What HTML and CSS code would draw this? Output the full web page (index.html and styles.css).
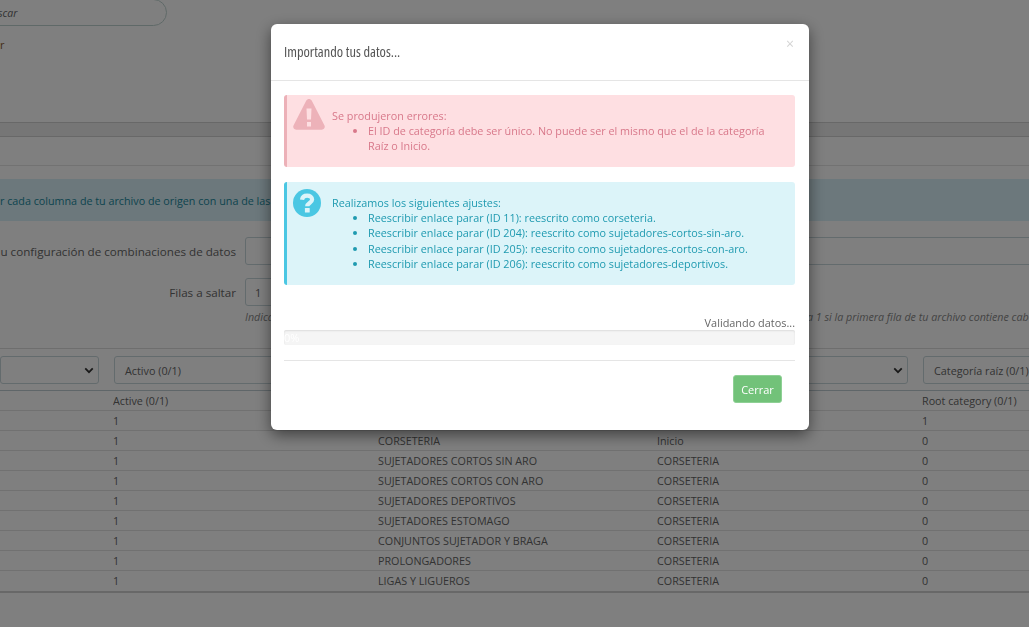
FILE: index.html
```html
<!DOCTYPE html>
<html lang="es">
<head>
<meta charset="utf-8">
<title>Importando tus datos</title>
<link rel="stylesheet" href="styles.css">
</head>
<body>
<div class="page">
  <div class="search"><span class="search-text">scar</span></div>
  <div class="crumb">r</div>
  <div class="band"></div>
  <div class="band-row"></div>
  <div class="page-alert"><span>r cada columna de tu archivo de origen con una de las</span></div>
  <div class="form-row">
    <label class="form-label">u configuración de combinaciones de datos</label>
    <div class="field field-wide"></div>
  </div>
  <div class="form-row form-row-second">
    <label class="form-label">Filas a saltar</label>
    <div class="field field-short">1</div>
  </div>
  <div class="help-row">
    <em class="help-start">Indica</em>
    <em class="help-end">a 1 si la primera fila de tu archivo contiene cabeceras</em>
  </div>
  <div class="selects">
    <div class="select select-end"><svg class="chev" viewBox="0 0 12 8"><path d="M1.5 1.5 6 6l4.5-4.5" /></svg></div>
    <div class="select">Activo (0/1)</div>
    <div class="select"></div>
    <div class="select select-end"><svg class="chev" viewBox="0 0 12 8"><path d="M1.5 1.5 6 6l4.5-4.5" /></svg></div>
    <div class="select">Categoría raíz (0/1)</div>
  </div>
  <table class="data">
    <colgroup><col class="c1"><col class="c2"><col class="c3"><col class="c4"><col class="c5"></colgroup>
    <thead><tr><th></th><th>Active (0/1)</th><th></th><th></th><th>Root category (0/1)</th></tr></thead>
    <tbody>
      <tr><td></td><td>1</td><td></td><td></td><td>1</td></tr>
      <tr><td></td><td>1</td><td>CORSETERIA</td><td>Inicio</td><td>0</td></tr>
      <tr><td></td><td>1</td><td>SUJETADORES CORTOS SIN ARO</td><td>CORSETERIA</td><td>0</td></tr>
      <tr><td></td><td>1</td><td>SUJETADORES CORTOS CON ARO</td><td>CORSETERIA</td><td>0</td></tr>
      <tr><td></td><td>1</td><td>SUJETADORES DEPORTIVOS</td><td>CORSETERIA</td><td>0</td></tr>
      <tr><td></td><td>1</td><td>SUJETADORES ESTOMAGO</td><td>CORSETERIA</td><td>0</td></tr>
      <tr><td></td><td>1</td><td>CONJUNTOS SUJETADOR Y BRAGA</td><td>CORSETERIA</td><td>0</td></tr>
      <tr><td></td><td>1</td><td>PROLONGADORES</td><td>CORSETERIA</td><td>0</td></tr>
      <tr><td></td><td>1</td><td>LIGAS Y LIGUEROS</td><td>CORSETERIA</td><td>0</td></tr>
    </tbody>
  </table>
</div>

<div class="overlay">
  <div class="modal">
    <div class="modal-header">
      <h4 class="modal-title">Importando tus datos...</h4>
      <span class="close">×</span>
    </div>
    <div class="modal-body">
      <div class="alert alert-danger">
        <svg class="alert-icon icon-warn" viewBox="0 0 32 31">
          <path fill-rule="evenodd" d="M16 0c1.200 0 2.100.6 2.700 1.600l12.800 25c.9 1.900-.4 4.100-2.600 4.100H3.100C.9 30.700-.4 28.500.5 26.600l12.800-25C13.900.6 14.800 0 16 0ZM13.500 9.500l.5 11h4l.5-11h-5ZM14 23v4.500h4V23h-4Z"/>
        </svg>
        <div class="alert-text">
          <p>Se produjeron errores:</p>
          <ul><li>El ID de categoría debe ser único. No puede ser el mismo que el de la categoría Raíz o Inicio.</li></ul>
        </div>
      </div>
      <div class="alert alert-info">
        <svg class="alert-icon icon-help" viewBox="0 0 28 28">
          <circle class="help-disc" cx="14" cy="14" r="14"/>
          <path class="help-mark" d="M9 10.800c.4-2.700 2.400-4.200 5.100-4.200 2.800 0 5 1.500 5 3.900 0 3.500-4.900 3.500-4.900 6.800"/>
          <rect class="help-dot" x="11.900" y="19.100" width="4.800" height="4.300" rx=".5"/>
        </svg>
        <div class="alert-text">
          <p>Realizamos los siguientes ajustes:</p>
          <ul>
            <li>Reescribir enlace parar (ID 11): reescrito como corseteria.</li>
            <li>Reescribir enlace parar (ID 204): reescrito como sujetadores-cortos-sin-aro.</li>
            <li>Reescribir enlace parar (ID 205): reescrito como sujetadores-cortos-con-aro.</li>
            <li>Reescribir enlace parar (ID 206): reescrito como sujetadores-deportivos.</li>
          </ul>
        </div>
      </div>
      <div class="progress-label">Validando datos...</div>
      <div class="progress"><span class="progress-value">0%</span></div>
      <div class="modal-actions">
        <button class="btn-close" type="button">Cerrar</button>
      </div>
    </div>
  </div>
</div>
</body>
</html>
```

FILE: styles.css
```css
* { box-sizing: border-box; }
html, body { margin: 0; padding: 0; height: 100%; overflow: hidden; }
body {
  background: #fff;
  font-family: "Open Sans", "Liberation Sans", sans-serif;
  font-size: 11px;
  color: #666;
}

.page {
  width: 1029px;
  height: 627px;
  overflow: hidden;
  display: flex;
  flex-direction: column;
}
.search {
  flex: none;
  width: 187px;
  height: 27px;
  margin: -1px 0 0 -20px;
  padding: 1px 0 0 17px;
  border: 1px solid #bfd3d0;
  border-radius: 14px;
  display: flex;
  align-items: center;
  font-style: italic;
  font-size: 10.500px;
  color: #666;
}
.crumb { flex: none; height: 16px; margin-top: 11px; line-height: 16px; color: #8a5a2a; font-size: 11px; }
.band {
  flex: none;
  height: 15px;
  margin-top: 69px;
  background: #ececec;
  border-top: 1px solid #d0d0d0;
  border-bottom: 1px solid #d0d0d0;
}
.band-row { flex: none; height: 29px; border-bottom: 1px solid #e4e4e4; }
.page-alert {
  flex: none;
  height: 42px;
  margin-top: 13px;
  background: #d8f0f8;
  color: #1a8a9e;
  display: flex;
  align-items: center;
  white-space: nowrap;
  font-size: 10.760px;
}
.form-row { flex: none; display: flex; height: 28px; margin-top: 16px; gap: 9px; }
.form-row-second { margin-top: 13px; }
.form-label {
  flex: none;
  width: 236px;
  display: flex;
  justify-content: flex-end;
  align-items: center;
  white-space: nowrap;
  font-size: 11.650px;
  color: #666;
}
.field {
  height: 28px;
  border: 1px solid #c7d6db;
  border-radius: 3px;
  padding-left: 9px;
  display: flex;
  align-items: center;
}
.field-wide { flex: none; width: 900px; }
.field-short { flex: none; width: 100px; }
.help-row {
  flex: none;
  height: 43px;
  padding-left: 245px;
  padding-top: 3px;
  line-height: 16px;
  display: flex;
  border-bottom: 1px solid #dcdcdc;
  color: #888;
  white-space: nowrap;
  font-size: 10.700px;
}
.help-start { flex: none; width: 562px; }
.selects {
  flex: none;
  display: grid;
  grid-template-columns: 99px repeat(3, 1fr) 130px;
  column-gap: 15px;
  width: 1053px;
  padding-top: 7px;
  padding-bottom: 6px;
}
.select {
  height: 28px;
  border: 1px solid #c7d6db;
  border-radius: 3px;
  padding: 0 10px;
  display: flex;
  align-items: center;
  justify-content: space-between;
  white-space: nowrap;
  overflow: hidden;
  font-size: 10.800px;
}
.select-end { justify-content: flex-end; padding-right: 4px; }
.chev { width: 10px; height: 7px; fill: none; stroke: #333; stroke-width: 2.200; }

.data {
  flex: none;
  width: 1029px;
  table-layout: fixed;
  border-collapse: collapse;
  border-top: 1px solid #bfcdd3;
  border-bottom: 2px solid #d0d0d0;
  font-size: 10.750px;
}
.c1 { width: 113px; }
.c2 { width: 265px; }
.c3 { width: 279px; }
.c4 { width: 265px; }
.c5 { width: 107px; }
.data th, .data td {
  height: 20px;
  padding: 0;
  text-align: left;
  font-weight: 400;
  white-space: nowrap;
  overflow: hidden;
  border-bottom: 1px solid #e2e2e2;
}
.data tbody tr:last-child td { height: 21px; border-bottom: 0; }

.overlay {
  position: fixed;
  inset: 0;
  padding-left: 51px;
  background: rgba(0, 0, 0, .5);
  display: flex;
  justify-content: center;
  align-items: flex-start;
}
.modal {
  width: 538px;
  height: 406px;
  margin-top: 24px;
  background: #fff;
  border-radius: 6px;
  box-shadow: 0 5px 15px rgba(0, 0, 0, .5);
  display: flex;
  flex-direction: column;
}
.modal-header {
  flex: none;
  height: 57px;
  padding: 0 13px;
  border-bottom: 1px solid #e5e5e5;
  display: flex;
  justify-content: space-between;
  align-items: flex-start;
}
.modal-title {
  margin: 19px 0 0;
  font-size: 14.400px;
  line-height: 17px;
  font-weight: 400;
  font-stretch: 75%;
  color: #555;
}
.close { margin: 11px 2px 0 0; font-size: 14px; line-height: 18px; color: #d4d4d4; }
.modal-body { flex: 1; padding: 14px 14px 0 13px; display: flex; flex-direction: column; }

.alert {
  flex: none;
  display: flex;
  border-left: 3px solid;
  border-radius: 3px;
  padding-left: 6px;
}
.alert-danger {
  height: 72px;
  background: #fedfe2;
  border-color: #ecb1b8;
  color: #d8788a;
}
.alert-info {
  height: 103px;
  margin-top: 15px;
  background: #dcf4f9;
  border-color: #4ac7e3;
  color: #1f9ab0;
}
.alert-icon { flex: none; }
.icon-warn { width: 32px; height: 31px; margin-top: 4px; fill: #edb2b9; }
.icon-help { width: 28px; height: 28px; margin: 7px 4px 0 0; }
.help-disc { fill: #4ac7e3; }
.help-mark { fill: none; stroke: #dcf4f9; stroke-width: 4.200; }
.help-dot { fill: #dcf4f9; }
.alert-text { flex: 1; padding: 13px 28px 0 7px; font-size: 10.800px; line-height: 15.200px; }
.alert-text p { margin: 0; }
.alert-text ul { margin: 0; padding-left: 36px; }

.progress-label { flex: none; margin-top: 31px; height: 14px; line-height: 14px; text-align: right; color: #666; font-size: 10.900px; }
.progress {
  flex: none;
  height: 15px;
  margin-top: 0;
  background: #f5f5f5;
  border-radius: 2px;
  box-shadow: inset 0 1px 2px rgba(0, 0, 0, .1);
  color: #fff;
  font-size: 11px;
  line-height: 15px;
}
.modal-actions {
  flex: none;
  margin-top: 15px;
  border-top: 1px solid #e5e5e5;
  padding: 14px 13px 0 0;
  display: flex;
  justify-content: flex-end;
}
.btn-close {
  width: 49px;
  height: 28px;
  padding: 0;
  background: #72c279;
  border: 1px solid #8ed095;
  border-radius: 3px;
  color: #fff;
  font-family: inherit;
  font-size: 11px;
}
```
